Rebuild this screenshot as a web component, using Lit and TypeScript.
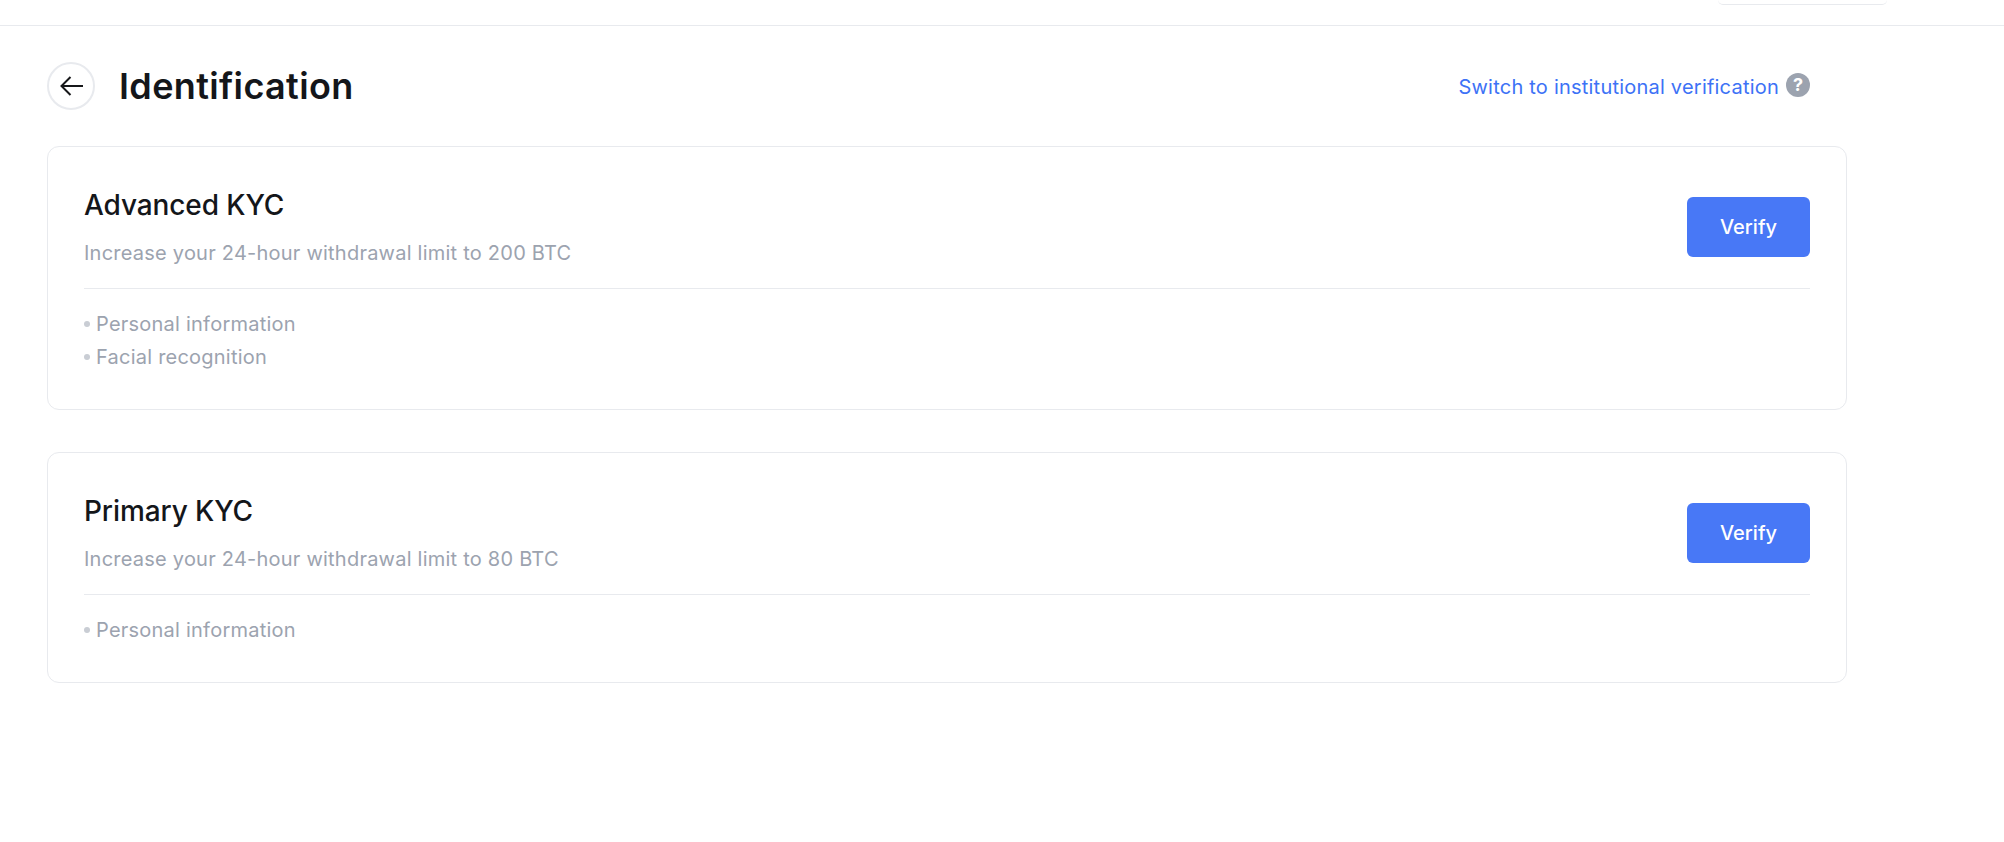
import { LitElement, html, css, svg } from "lit";
import { customElement } from "lit/decorators.js";

const cards = [
  {
    title: "Advanced KYC",
    desc: "Increase your 24-hour withdrawal limit to 200 BTC",
    items: ["Personal information", "Facial recognition"],
  },
  {
    title: "Primary KYC",
    desc: "Increase your 24-hour withdrawal limit to 80 BTC",
    items: ["Personal information"],
  },
];

const backIcon = svg`<path d="M25 13H4M12.5 4 3.5 13l9 9" fill="none" stroke="#17181a" stroke-width="2"/>`;

@customElement("app-root")
export class AppRoot extends LitElement {
  static styles = css`
    :host {
      display: block;
      min-height: 842px;
      background: #fff;
      font-family: Inter, "Liberation Sans", sans-serif;
      color: #14161a;
    }
    .topbar {
      height: 25px;
      border-bottom: 1px solid #e8eaee;
      display: flex;
      justify-content: flex-end;
      padding-right: 117px;
    }
    .dropdown {
      width: 169px;
      height: 4px;
      border-radius: 0 0 8px 8px;
      border-bottom: 1px solid #e8eaee;
    }
    .content {
      width: 1800px;
      margin-left: 47px;
    }
    .head {
      margin-top: 36px;
      margin-bottom: 36px;
      height: 48px;
      display: flex;
      align-items: center;
      padding-right: 37px;
    }
    .back {
      width: 48px;
      height: 48px;
      box-sizing: border-box;
      border: 2px solid #e8eaee;
      border-radius: 50%;
      display: flex;
      align-items: center;
      justify-content: center;
      margin-right: 24px;
    }
    h1 {
      margin: 0;
      flex: 1;
      font-size: 36px;
      line-height: 48px;
      font-weight: 600;
      letter-spacing: 0.36px;
    }
    .switch {
      font-size: 20px;
      color: #3d72f6;
      line-height: 28px;
      letter-spacing: 0.22px;
      padding-top: 2px;
    }
    .help {
      width: 24px;
      height: 24px;
      margin-left: 7px;
      margin-top: -2px;
      border-radius: 50%;
      background: #9ca3af;
      color: #fff;
      font-size: 18px;
      font-weight: 700;
      line-height: 24px;
      text-align: center;
    }
    .card {
      box-sizing: border-box;
      border: 1px solid #e8eaee;
      border-radius: 12px;
      padding: 36px 36px 0;
      margin-bottom: 42px;
    }
    .top {
      display: flex;
      align-items: flex-start;
      justify-content: space-between;
      box-sizing: border-box;
      height: 106px;
      border-bottom: 1px solid #e8eaee;
    }
    .text {
      margin-top: 4px;
    }
    h2 {
      margin: 0 0 16px;
      font-size: 28px;
      line-height: 36px;
      font-weight: 500;
      letter-spacing: -0.1px;
    }
    .desc {
      font-size: 20px;
      line-height: 28px;
      color: #9ca3af;
      letter-spacing: 0.23px;
    }
    button {
      width: 123px;
      height: 60px;
      margin-top: 14px;
      border: 0;
      border-radius: 6px;
      background: #4878f6;
      color: #fff;
      font: 500 20px Inter, "Liberation Sans", sans-serif;
      padding: 0;
    }
    ul {
      list-style: none;
      margin: 0;
      padding: 18px 0 36px;
    }
    li {
      display: flex;
      align-items: center;
      height: 33px;
      font-size: 20px;
      color: #9ca3af;
      letter-spacing: 0.23px;
    }
    li::before {
      content: "";
      width: 6px;
      height: 6px;
      border-radius: 50%;
      background: #c9cdd4;
      margin-right: 6px;
    }
  `;

  render() {
    return html`
      <div class="topbar"><div class="dropdown"></div></div>
      <div class="content">
        <div class="head">
          <div class="back">
            <svg width="26" height="26" viewBox="0 0 26 26">${backIcon}</svg>
          </div>
          <h1>Identification</h1>
          <span class="switch">Switch to institutional verification</span>
          <div class="help">?</div>
        </div>
        ${cards.map(
          (card) => html`
            <section class="card">
              <div class="top">
                <div class="text">
                  <h2>${card.title}</h2>
                  <div class="desc">${card.desc}</div>
                </div>
                <button>Verify</button>
              </div>
              <ul>
                ${card.items.map((item) => html`<li>${item}</li>`)}
              </ul>
            </section>
          `
        )}
      </div>
    `;
  }
}
